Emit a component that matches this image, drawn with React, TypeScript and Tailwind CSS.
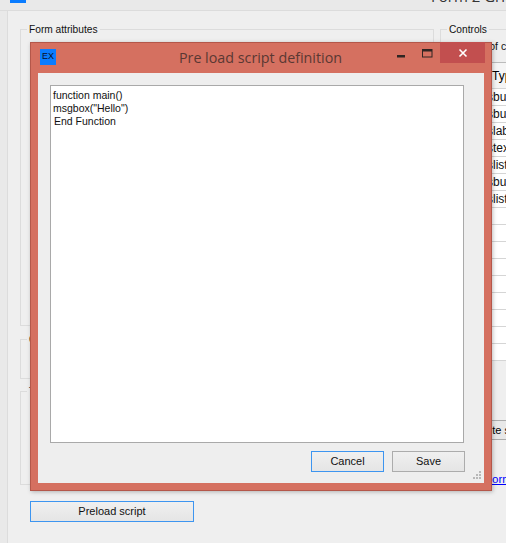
const rows = ["sbu", "sbu", "slab", "stex", "slist", "sbu", "slist", "", "", "", "", "", "", "", "", ""];

function GroupBox({ title, className, children }: { title?: string; className: string; children?: React.ReactNode }) {
  return (
    <fieldset className={`border border-[#dcdcdc] ${className}`}>
      {title && <legend className="ml-[6px] px-[2px] text-[10.2px] text-[#111] leading-[13px]">{title}</legend>}
      {children}
    </fieldset>
  );
}

function DialogButton({ label, focused, className }: { label: string; focused?: boolean; className: string }) {
  return (
    <button
      className={`h-[21px] border-[1px] bg-gradient-to-b from-[#f0f0f0] to-[#e5e5e5] text-[11px] leading-[17px] text-[#111] ${
        focused ? "border-[#3d95f0]" : "border-[#acacac]"
      } ${className}`}
    >
      {label}
    </button>
  );
}

export default function App() {
  return (
    <div className="relative w-[506px] h-[543px] overflow-hidden bg-[#efefef] font-['Liberation_Sans',sans-serif] text-[10.5px]">
      {/* Main window behind the dialog */}
      <div className="h-[11px] bg-[#e9e9e9] border-b border-[#dcdcdc] relative overflow-hidden">
        <div className="absolute left-[10px] top-0 w-[16px] h-[3px] bg-[#0a7cff]" />
        <div className="absolute left-[431px] top-[-15px] text-[15px] whitespace-nowrap text-[#333] font-['Open_Sans',sans-serif]">
          Form 2 Grid
        </div>
      </div>
      <div className="flex h-[532px]">
        <div className="w-[8px] shrink-0 bg-[#e9e9e9] border-r border-[#dcdcdc]" />
        <div className="flex flex-col w-[425px] shrink-0 pl-[12px] pt-[12px]">
          <GroupBox title="Form attributes" className="h-[303px] w-[414px]" />
          <GroupBox title="C" className="h-[46px] w-[414px] mt-[7px] -mb-[6px]" />
          <GroupBox title="T" className="h-[100px] w-[414px] mt-[12px]" />
          <DialogButton label="Preload script" focused className="w-[164px] ml-[10px] mt-[16px]" />
        </div>
        <div className="flex-1 ml-[7px] pt-[12px] min-w-0">
          <GroupBox title="Controls" className="h-[400px] w-[120px]">
            <div className="pl-[8px] mt-[4px]">
              <div className="whitespace-nowrap leading-[13px] text-[#111]">Number of controls</div>
              <div className="mt-[9px] border-t border-[#bbb] bg-white w-[110px] text-[12px]">
                <div className="h-[26px] pl-[43px] border-b border-[#d5d5d5] leading-[26px] bg-[#f5f5f5]">Type</div>
                {rows.map((r, i) => (
                  <div key={i} className="h-[17px] pl-[38px] border-b border-[#d5d5d5] leading-[16px] text-[#111]">
                    {r}
                  </div>
                ))}
              </div>
            </div>
          </GroupBox>
          <button className="absolute left-[470px] top-[420px] w-[60px] h-[20px] border border-[#acacac] bg-[#e8e8e8] pl-[5px] text-[11px] text-left whitespace-nowrap">
            Write script
          </button>
          <a className="absolute left-[485px] top-[471px] text-[11.5px] text-[#00f] underline whitespace-nowrap">Form link</a>
        </div>
      </div>

      {/* Pre load script dialog */}
      <div className="absolute left-[30px] top-[42px] w-[462px] h-[449px] flex flex-col bg-[#d57060] border border-[#b4574a] shadow-[1px_1px_4px_rgba(0,0,0,0.25)]">
        <div className="relative h-[30px] shrink-0">
          <div className="absolute left-[9px] top-[6px] w-[16px] h-[16px] bg-[#0a7cff] flex items-center justify-center text-[9px] text-[#0a0f24]">
            EX
          </div>
          <div className="text-center pt-[3px] pr-[1px] text-[14.3px] leading-[24px] text-[#5a3833] font-['Open_Sans',sans-serif]">
            Pre load script definition
          </div>
          <svg className="absolute left-[365px] top-[6px]" width="12" height="12" viewBox="0 0 12 12">
            <rect x="1" y="6" width="8" height="2.5" fill="#2f2522" />
          </svg>
          <svg className="absolute left-[391px] top-[6px]" width="11" height="9" viewBox="0 0 11 9" fill="none">
            <rect x="0.5" y="0.5" width="9.5" height="7.5" stroke="#2f2522" />
            <rect x="0.5" y="0.5" width="9.5" height="2" fill="#2f2522" />
          </svg>
          <div className="absolute left-[409px] -top-[1px] w-[45px] h-[21px] bg-[#c24f4f] flex items-center justify-center">
            <svg width="10" height="10" viewBox="0 0 10 10" stroke="#fff" strokeWidth="1.6">
              <path d="M1.5 1.5 L8.5 8.5 M8.5 1.5 L1.5 8.5" />
            </svg>
          </div>
        </div>
        <div className="relative mx-[7px] h-[410px] bg-[#eeeeee] flex flex-col pl-[12px] pr-[20px] pt-[12px]">
          <div className="h-[358px] bg-white border border-[#a9a9a9] pl-[2px] pt-[3px] leading-[13px] text-[10.5px] text-[#111]">
            <div>function main()</div>
            <div>msgbox("Hello")</div>
            <div className="pl-[1px]">End Function</div>
          </div>
          <div className="flex justify-end gap-[8px] mt-[8px] -mr-[1px]">
            <DialogButton label="Cancel" focused className="w-[73px]" />
            <DialogButton label="Save" className="w-[73px]" />
          </div>
          <svg className="absolute right-[2px] bottom-[2px]" width="10" height="10" viewBox="0 0 10 10" fill="#b8b8b8">
            <rect x="7" y="0" width="2" height="2" />
            <rect x="4" y="3" width="2" height="2" />
            <rect x="7" y="3" width="2" height="2" />
            <rect x="1" y="6" width="2" height="2" />
            <rect x="4" y="6" width="2" height="2" />
            <rect x="7" y="6" width="2" height="2" />
          </svg>
        </div>
      </div>
    </div>
  );
}
